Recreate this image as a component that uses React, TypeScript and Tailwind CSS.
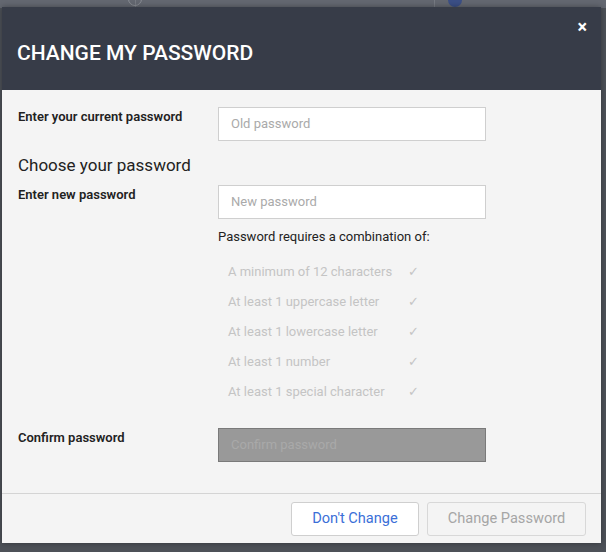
import React from "react";

const reqs = [
  "A minimum of 12 characters",
  "At least 1 uppercase letter",
  "At least 1 lowercase letter",
  "At least 1 number",
  "At least 1 special character",
];

export default function App() {
  return (
    <div
      className="relative w-[606px] h-[552px] overflow-hidden bg-[#4d5158]"
      style={{ fontFamily: "Roboto, 'Liberation Sans', sans-serif" }}
    >
      {/* background page strip */}
      <div className="h-[8px] bg-[#646871] flex">
        <div className="w-[136px] border-r border-[#777b83]" />
        <div className="w-[299px] border-r border-[#777b83] relative">
          <div className="absolute left-[-8px] top-[-8px] w-[14px] h-[14px] rounded-full border border-[#8a8e95]" />
        </div>
        <div className="relative">
          <div className="absolute left-[13px] top-[-7px] w-[14px] h-[14px] rounded-full bg-[#3b4f86]" />
        </div>
      </div>

      {/* modal */}
      <div className="absolute left-[2px] top-[7px] w-[599px] h-[536px] bg-[#f4f4f4] flex flex-col shadow-[0_0_6px_rgba(0,0,0,0.35)]">
        <div className="h-[83px] bg-[#373c48] relative flex items-center px-[15px]">
          <h1 className="text-white text-[21px] font-medium mt-[10px]">CHANGE MY PASSWORD</h1>
          <span className="absolute right-[14px] top-[11px] text-white text-[18px] font-bold leading-none">×</span>
        </div>

        <div className="flex-1 pl-[16px] pt-[17px]">
          <div className="flex">
            <div className="w-[200px] pt-[2px] text-[13px] font-semibold text-[#222] leading-[15px]">
              Enter your current password
            </div>
            <div className="w-[268px] h-[34px] bg-white border border-[#cfcfcf] flex items-center pl-[12px] text-[13px] text-[#aaa]">
              Old password
            </div>
          </div>

          <div className="mt-[14px] text-[17px] text-[#222] leading-[20px]">Choose your password</div>

          <div className="flex mt-[10px]">
            <div className="w-[200px] pt-[2px] text-[13px] font-semibold text-[#222] leading-[15px]">
              Enter new password
            </div>
            <div className="flex flex-col">
              <div className="w-[268px] h-[34px] bg-white border border-[#cfcfcf] flex items-center pl-[12px] text-[13px] text-[#aaa]">
                New password
              </div>
              <div className="mt-[10px] text-[13px] text-[#222] leading-[15px]">
                Password requires a combination of:
              </div>
              <div className="mt-[13px] pl-[10px] flex flex-col">
                {reqs.map((r) => (
                  <div key={r} className="h-[30px] flex items-center text-[13px] text-[#c4c4c4]">
                    <span className="w-[180px]">{r}</span>
                    <span className="text-[13px]">✓</span>
                  </div>
                ))}
              </div>
            </div>
          </div>

          <div className="flex mt-[21px]">
            <div className="w-[200px] pt-[2px] text-[13px] font-semibold text-[#222] leading-[15px]">
              Confirm password
            </div>
            <div className="w-[268px] h-[34px] bg-[#999999] border border-[#7a7a7a] flex items-center pl-[12px] text-[13px] text-[#a9a9a9]">
              Confirm password
            </div>
          </div>
        </div>

        <div className="border-t border-[#d4d4d4] h-[50px] flex justify-end items-start pt-[8px] pr-[15px] gap-[8px]">
          <button className="w-[128px] h-[34px] bg-white border border-[#cfcfcf] rounded-[3px] text-[14.6px] text-[#3b6fd8]">
            Don't Change
          </button>
          <button className="w-[159px] h-[34px] bg-[#f4f4f4] border border-[#d8d8d8] rounded-[3px] text-[14.6px] text-[#a6a6a6]">
            Change Password
          </button>
        </div>
      </div>
    </div>
  );
}
